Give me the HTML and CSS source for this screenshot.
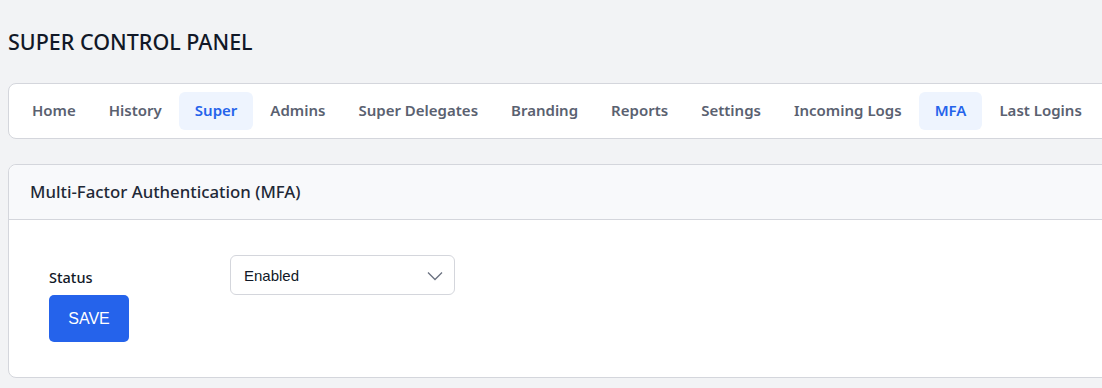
FILE: index.html
```html
<!DOCTYPE html>
<html lang="en">
<head>
  <meta charset="UTF-8" />
  <meta name="viewport" content="width=device-width, initial-scale=1.0"/>
  <title>Super Control Panel - MFA</title>
  <link rel="stylesheet" href="styles.css">
</head>
<body>
  <div class="page">
    <h1 class="page-title">SUPER CONTROL PANEL</h1>

    <nav class="tabs">
      <a href="#">Home</a>
      <a href="#">History</a>
      <a href="#" class="active">Super</a>
      <a href="#">Admins</a>
      <a href="#">Super Delegates</a>
      <a href="#">Branding</a>
      <a href="#">Reports</a>
      <a href="#">Settings</a>
      <a href="#">Incoming Logs</a>
      <a href="#" class="active">MFA</a>
      <a href="#">Last Logins</a>
    </nav>

    <section class="panel">
      <div class="panel-header">Multi-Factor Authentication (MFA)</div>
      <form class="panel-body">
        <div class="form-row">
          <label for="status">Status</label>
          <div class="select-wrap">
            <select id="status">
              <option>Enabled</option>
              <option>Disabled</option>
            </select>
            <svg class="chevron" width="16" height="10" viewBox="0 0 16 10">
              <path d="M1 1.5 L8 8.5 L15 1.5" fill="none" stroke="#6b7280" stroke-width="1.3"/>
            </svg>
          </div>
        </div>
        <button type="button" class="btn-save">SAVE</button>
      </form>
    </section>
  </div>
</body>
</html>
```

FILE: styles.css
```css
body {
  font-family: 'Noto Sans', sans-serif;
  background-color: #f2f3f5;
  color: #111827;
  margin: 0;
  overflow: hidden;
}
.page {
  width: 1130px;
  padding: 0 8px;
}
.page-title {
  margin: 0;
  padding: 27px 0 27px;
  font-size: 21.5px;
  font-weight: 500;
  line-height: 29px;
}
.tabs {
  display: flex;
  gap: 1px;
  background-color: #fff;
  border: 1px solid #d4d6dc;
  border-radius: 8px;
  padding: 8px 8px 8px 7px;
}
.tabs a {
  padding: 8px 16px;
  font-size: 15px;
  font-weight: 600;
  line-height: 21px;
  height: 21px;
  padding-bottom: 9px;
  color: #5a6170;
  text-decoration: none;
  border-radius: 6px;
}
.tabs a.active {
  color: #2563eb;
  background-color: #eef4fe;
}
.panel {
  margin-top: 25px;
  background-color: #fff;
  border: 1px solid #d4d6dc;
  border-radius: 8px;
}
.panel-header {
  background-color: #f8f9fb;
  border-bottom: 1px solid #d4d6dc;
  border-radius: 8px 8px 0 0;
  padding: 15px 21px;
  font-size: 16.8px;
  font-weight: 500;
  line-height: 24px;
  color: #1f2937;
}
.panel-body {
  padding: 35px 40px 35px;
}
.form-row {
  display: flex;
  align-items: center;
}
.form-row label {
  width: 181px;
  padding-top: 4px;
  font-size: 14.5px;
  font-weight: 500;
}
.select-wrap {
  position: relative;
  width: 225px;
}
.select-wrap select {
  width: 100%;
  height: 40px;
  appearance: none;
  background-color: #fff;
  border: 1px solid #d4d6dc;
  border-radius: 6px;
  padding: 0 13px;
  font-family: 'Liberation Sans', Arial, sans-serif;
  font-size: 15px;
  color: #111827;
}
.chevron {
  position: absolute;
  right: 12px;
  top: 16px;
  pointer-events: none;
}
.btn-save {
  display: block;
  width: 80px;
  height: 47px;
  background-color: #2563eb;
  color: #fff;
  border: none;
  border-radius: 5px;
  font-family: 'Liberation Sans', Arial, sans-serif;
  font-size: 16px;
  cursor: pointer;
}
```
